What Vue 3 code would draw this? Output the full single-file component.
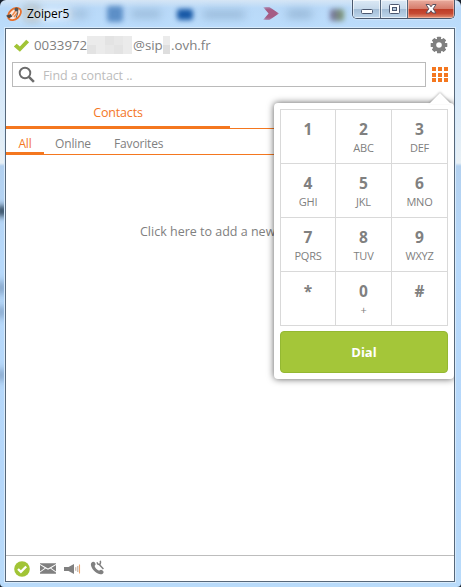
<script setup>
import { ref } from 'vue'

const keys = [
  { digit: '1', letters: '' },
  { digit: '2', letters: 'ABC' },
  { digit: '3', letters: 'DEF' },
  { digit: '4', letters: 'GHI' },
  { digit: '5', letters: 'JKL' },
  { digit: '6', letters: 'MNO' },
  { digit: '7', letters: 'PQRS' },
  { digit: '8', letters: 'TUV' },
  { digit: '9', letters: 'WXYZ' },
  { digit: '*', letters: '' },
  { digit: '0', letters: '+' },
  { digit: '#', letters: '' },
]
const filters = ['All', 'Online', 'Favorites']
const active = ref('All')
</script>

<template>
  <div class="window">
    <div class="glass" aria-hidden="true">
      <i class="blob glow"></i>
      <i class="blob brown"></i><i class="blob t1"></i>
      <i class="blob calendar"></i><i class="blob t2"></i>
      <i class="blob cloud"></i><i class="blob t3"></i>
      <i class="blob red"></i><i class="blob t4"></i>
      <i class="blob books"></i>
      <i class="blob s1"></i><i class="blob s2"></i><i class="blob s3"></i><i class="blob s4"></i>
    </div>

    <header class="titlebar">
      <svg class="logo" width="16" height="16" viewBox="0 0 16 16">
        <ellipse cx="8.500" cy="8" rx="7.400" ry="5" transform="rotate(-42 8.500 8)" fill="#fbe9df" stroke="#e8702c" stroke-width="1.800" />
        <path d="M6.300 9.500L9.500 5M8 11l3.500-4.500" fill="none" stroke="#ef8a4b" stroke-width="1.500" />
        <path d="M11.200 3.200c1.500 2.500.5 5-1.200 8.600" fill="none" stroke="#666" stroke-width="1.100" />
        <circle cx="10.500" cy="3.600" r="2" fill="#555" />
        <path d="M0 9.800l4.800-1.900 1.500 2.500-3.300 1.800z" fill="#484848" />
      </svg>
      <span class="title">Zoiper5</span>
      <div class="controls">
        <span class="ctl min">
          <svg width="14" height="8" viewBox="0 0 14 8"><rect x="1.500" y="1.500" width="11" height="4" rx="1" fill="#fff" stroke="#4c5870" /></svg>
        </span>
        <span class="ctl max">
          <svg width="13" height="12" viewBox="0 0 13 12"><rect x="1.500" y="1.500" width="10" height="9" rx="1" fill="#fff" stroke="#4c5870" /><rect x="4.500" y="4.500" width="4" height="3" fill="#b3c9dd" stroke="#4c5870" /></svg>
        </span>
        <span class="ctl close">
          <svg width="14" height="12" viewBox="0 0 14 12"><path d="M2 1.500h3.300L7 3.800l1.700-2.300H12L9.200 5.800l2.800 4.200H8.700L7 7.700 5.300 10H2l2.800-4.200z" fill="#fff" stroke="#594f5c" stroke-width="1" /></svg>
        </span>
      </div>
    </header>

    <main class="client">
      <section class="account">
        <svg class="check" width="17" height="14" viewBox="0 0 17 14"><path d="M.8 7.500L3.700 4.700l3.200 2.700L13.200.8l2.900 2.500-9.200 9.400z" fill="#a1c436" /></svg>
        <span class="number">0033972</span>
        <span class="mask">
          <i></i><i></i><i></i><i></i><i></i><i></i><i></i><i></i><i></i><i></i>
        </span>
        <span class="sip">@sip</span>
        <span class="mask small"><i></i><i></i></span>
        <span class="domain">.ovh.fr</span>
        <svg class="gear" width="18" height="18" viewBox="-9 -9 18 18">
          <g fill="#808080">
            <rect v-for="a in 8" :key="a" x="-2" y="-8.300" width="4" height="5" rx=".6" :transform="`rotate(${a * 45})`" />
          </g>
          <circle r="4.700" fill="none" stroke="#808080" stroke-width="3.800" />
        </svg>
      </section>

      <section class="search">
        <div class="field">
          <svg width="18" height="18" viewBox="0 0 18 18"><circle cx="7" cy="7" r="5.300" fill="none" stroke="#6c6c6c" stroke-width="1.900" /><path d="M10.900 10.900l5 5" stroke="#6c6c6c" stroke-width="2.500" /></svg>
          <span>Find a contact ..</span>
        </div>
        <div class="grid-icon"><i v-for="n in 9" :key="n"></i></div>
      </section>

      <nav class="tabs"><span class="tab">Contacts</span></nav>
      <nav class="filters">
        <span v-for="f in filters" :key="f" :class="['filter', f.toLowerCase(), { on: active === f }]" @click="active = f">{{ f }}</span>
      </nav>

      <div class="list"><p>Click here to add a new</p></div>

      <footer class="status">
        <svg width="16" height="16" viewBox="0 0 16 16"><circle cx="8" cy="8" r="7.800" fill="#a1c436" /><path d="M4 8l2.900 2.900 5.300-5.400" fill="none" stroke="#fff" stroke-width="2.300" /></svg>
        <svg class="mail" width="16" height="11" viewBox="0 0 16 11"><path d="M0 .3h16V1L8 5.600 0 1zM0 2l4.800 2.900L0 8.500zM16 2l-4.800 2.900L16 8.500zM0 10.700V9.600l5.700-4.100L8 6.800l2.300-1.300L16 9.600v1.100z" fill="#808080" /></svg>
        <svg class="speaker" width="17" height="12" viewBox="0 0 17 12"><path d="M0 4h4.500L10 1v10L4.500 8H0z" fill="#808080" /><path d="M11.800 4.200v3.600M13.800 3v6" stroke="#b7a99c" stroke-width="1" /><path d="M15.500 1.500v9" stroke="#efa66d" stroke-width="1.100" /></svg>
        <svg class="phone" width="16" height="16" viewBox="0 0 16 16"><path d="M3.400 1.800c1 0 2.200 1.500 2.200 2.400 0 .9-1.100 1.300-.9 2.100.4 1.600 2.300 3.500 4 4.200.9.300 1.300-.8 2.200-.8 1.100.1 2.700 1.300 2.700 2.200 0 1.500-1.800 2.700-3.400 2.300C5.600 13.300 1.600 9.200.9 5 .6 3.500 1.900 1.900 3.400 1.800z" fill="#808080" /><path d="M8.800 4.100l4.600 4.800M7.200 2.200c.2 2 .8 2.400 2.800 2.200M10.300.7c.4 1.200.3 2.200-.2 3.400" fill="none" stroke="#808080" stroke-width="1.500" /></svg>
      </footer>

      <aside class="dialpad">
        <div class="arrow"></div>
        <div class="keys">
          <button v-for="k in keys" :key="k.digit" class="key">
            <b>{{ k.digit }}</b><small>{{ k.letters }}</small>
          </button>
        </div>
        <button class="dial">Dial</button>
      </aside>
    </main>
  </div>
</template>

<style>
body { margin: 0; background: #18202c; overflow: hidden; }
</style>

<style scoped>
* { box-sizing: border-box; }
.window {
  position: relative;
  display: flex;
  flex-direction: column;
  width: 461px;
  height: 587px;
  padding: 0 6px 5px 5px;
  overflow: hidden;
  border-radius: 6px 6px 4px 4px;
  font-family: "Open Sans", "Noto Sans", sans-serif;
  color: #808080;
  background: linear-gradient(#d5e5f5 0, #b9d9f8 8px, #bbdcfb 27px, #d0e5fa 60px, #dcebf8 120px, #e8f0f5 163px, #b2d0ef 166px, #b7d9fb 260px, #b5d7fa 480px, #b9dbfa 587px);
}
.glass { position: absolute; inset: 0; overflow: hidden; }
.blob { position: absolute; filter: blur(4px); border-radius: 3px; }
.brown { left: 24px; top: 6px; width: 16px; height: 15px; background: #8f9088; opacity: .6; }
.t1 { left: 64px; top: 10px; width: 24px; height: 8px; background: #7795b2; opacity: .4; }
.calendar { left: 107px; top: 6px; width: 16px; height: 16px; background: #4d82bf; filter: blur(2.500px); opacity: .85; }
.t2 { left: 131px; top: 10px; width: 30px; height: 8px; background: #7c9dbd; opacity: .5; }
.cloud { left: 177px; top: 9px; width: 16px; height: 11px; background: #1758a6; filter: blur(2.500px); }
.t3 { left: 203px; top: 11px; width: 42px; height: 7px; background: #7798b8; opacity: .55; }
.red { left: 263px; top: 7px; width: 16px; height: 13px; background: #a03c68; filter: blur(1.500px); opacity: .8; clip-path: polygon(0 0, 40% 0, 100% 50%, 40% 100%, 0 100%, 35% 50%); }
.t4 { left: 287px; top: 10px; width: 25px; height: 8px; background: #7798b8; opacity: .55; }
.books { left: 330px; top: 9px; width: 14px; height: 12px; background: linear-gradient(90deg, #65578b, #6d8a4d); opacity: .8; filter: blur(2.500px); }
.glow { left: 15px; top: 7px; width: 60px; height: 14px; background: #d9edff; opacity: .8; }
.s1 { left: -5px; top: 206px; width: 14px; height: 10px; background: #31495f; filter: blur(3px); }
.s2 { left: -5px; top: 282px; width: 12px; height: 12px; background: #6584a9; opacity: .7; }
.s3 { left: -5px; top: 307px; width: 12px; height: 10px; background: #6584a9; opacity: .7; }
.s4 { left: -5px; top: 370px; width: 12px; height: 10px; background: #6584a9; opacity: .7; }

.titlebar { position: relative; display: flex; flex: none; height: 28px; padding-left: 1px; }
.logo { margin-top: 6px; }
.title {
  margin: 6px 0 0 5px;
  font-size: 12px;
  line-height: 16px;
  color: #000;
  letter-spacing: -.1px;
  text-shadow: 0 0 5px #fff, 0 0 8px #fff;
}
.controls {
  display: flex;
  width: 103px;
  height: 19px;
  margin-left: auto;
  overflow: hidden;
  border: 1px solid #4a586d;
  border-top: 0;
  border-radius: 0 0 5px 5px;
  box-shadow: 0 0 2px #fff;
}
.ctl {
  display: flex;
  align-items: center;
  justify-content: center;
  width: 28px;
  border-right: 1px solid #56687e;
  background: linear-gradient(#dce9f5, #c6d9eb 48%, #a2bcd5 50%, #bed6eb);
  box-shadow: inset 0 0 0 1px rgba(255, 255, 255, .6);
}
.max { width: 27px; }
.min svg { margin-top: 5px; }
.close {
  flex: 1;
  border: 0;
  background: linear-gradient(#e8ab9e, #d67c6b 48%, #bd3b25 50%, #c64a33 75%, #e29375);
  box-shadow: inset 0 0 0 1px rgba(255, 210, 195, .55);
}

.client {
  position: relative;
  display: flex;
  flex: 1;
  flex-direction: column;
  overflow: hidden;
  border: 1px solid #566779;
  background: #fff;
  box-shadow: 0 0 0 1px #d8ebfc;
}
.account {
  display: flex;
  align-items: center;
  height: 33px;
  padding: 0 6px 2px 7px;
  font-size: 13.300px;
  line-height: 20px;
}
.check { margin-top: 3px; }
.number { width: 53px; margin-left: 4px; }
.mask {
  display: grid;
  grid-template-columns: repeat(5, 9px);
  width: 46px;
  height: 18px;
  overflow: hidden;
}
.mask i { background: #ebebeb; }
.mask i:nth-child(3n) { background: #e3e3e3; }
.mask i:nth-child(4n) { background: #e7e7e7; }
.mask.small { grid-template-columns: 7px; width: 7px; }
.mask.small i:nth-child(2) { background: #dedede; }
.sip { width: 30px; }
.domain { margin-left: 1px; }
.gear { margin-left: auto; }

.search { display: flex; align-items: center; height: 25px; padding-left: 6px; }
.field {
  display: flex;
  align-items: center;
  width: 414px;
  height: 25px;
  padding-left: 5px;
  border: 1px solid #bababa;
  font-size: 12.500px;
  color: #bcbcbc;
}
.field span { margin: 1px 0 0 7px; letter-spacing: -.1px; }
.grid-icon {
  display: grid;
  grid-template-columns: repeat(3, 4px);
  grid-auto-rows: 4px;
  gap: 1.500px 2px;
  margin-left: 6px;
}
.grid-icon i { background: #f4771f; }

.tabs { display: flex; height: 42px; border-bottom: 1px solid #f4771f; }
.tab {
  width: 224px;
  height: 42px;
  padding-top: 17px;
  border-bottom: 3px solid #f4771f;
  font-size: 12.500px;
  line-height: 18px;
  letter-spacing: -.15px;
  text-align: center;
  color: #f4771f;
}
.filters { display: flex; height: 26px; border-bottom: 1px solid #f4771f; }
.filter {
  height: 26px;
  padding-top: 6px;
  font-size: 12px;
  line-height: 18px;
  letter-spacing: -.15px;
}
.all { width: 38px; text-align: center; }
.online { width: 59px; padding-left: 11px; }
.favorites { padding-left: 11px; }
.on { border-bottom: 3px solid #f4771f; color: #f4771f; }

.list { flex: 1; padding: 68px 0 0 134px; overflow: hidden; }
.list p { margin: 0; font-size: 12.500px; line-height: 18px; white-space: nowrap; }
.status { display: flex; align-items: center; height: 26px; padding-left: 8px; border-top: 1px solid #bdbdbd; }
.mail { margin-left: 10px; }
.speaker { margin-left: 8px; }
.phone { margin: -1px 0 0 9px; }

.dialpad {
  position: absolute;
  top: 74px;
  right: 0;
  width: 180px;
  height: 276px;
  padding: 6px 6px 0;
  border-radius: 4px;
  background: #fff;
  box-shadow: 0 0 7px rgba(0, 0, 0, .65);
}
.arrow { position: absolute; top: -10px; right: 3px; width: 22px; height: 11px; filter: drop-shadow(0 -1px 1px rgba(0, 0, 0, .25)); }
.arrow::after { content: ""; display: block; height: 11px; background: #fff; clip-path: polygon(50% 0, 100% 100%, 0 100%); }
.keys {
  display: grid;
  grid-template-columns: 55px 56px 56px;
  grid-auto-rows: 54px;
  border-top: 1px solid #d9d9d9;
  border-left: 1px solid #d9d9d9;
}
button { font-family: inherit; }
.key {
  display: flex;
  flex-direction: column;
  align-items: center;
  padding: 9px 0 0;
  border: 0;
  border-right: 1px solid #d9d9d9;
  border-bottom: 1px solid #d9d9d9;
  background: #fff;
  color: #808080;
}
.key b { font-size: 15.500px; line-height: 20px; }
.key small { margin-top: 1px; font-size: 11px; line-height: 16px; letter-spacing: -.2px; }
.dial {
  width: 168px;
  height: 42px;
  margin-top: 5px;
  padding: 0;
  border: 1px solid #94b832;
  border-radius: 4px;
  background: #a4c639;
  font-size: 13px;
  font-weight: 700;
  color: #fff;
}
</style>
